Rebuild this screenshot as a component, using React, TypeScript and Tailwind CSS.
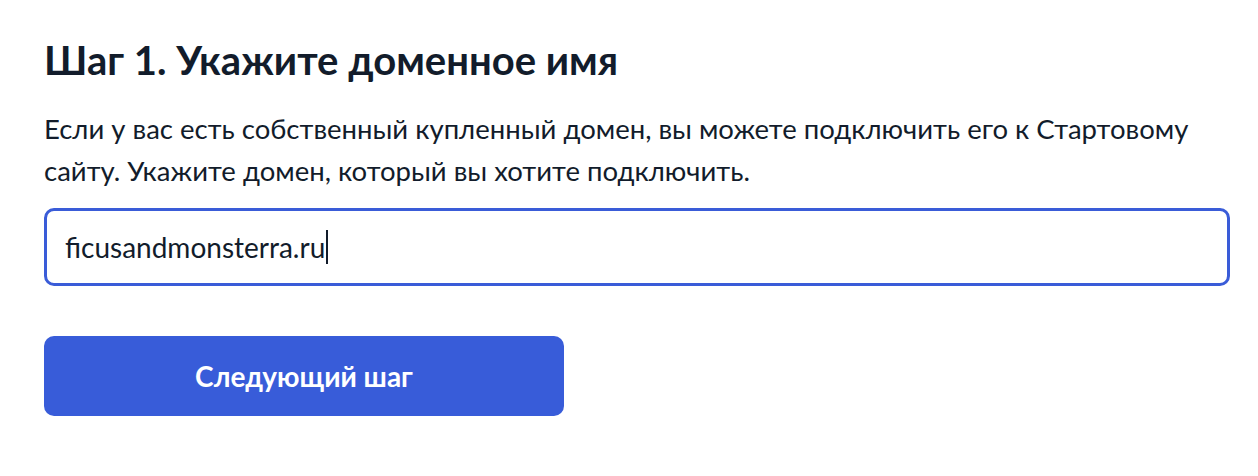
export default function App() {
  return (
    <div className="min-h-screen bg-white px-11 pt-[34px] text-[#121c2b]" style={{ fontFamily: 'Lato, "Noto Sans", sans-serif' }}>
      <h1 className="text-[40px] font-bold leading-[52px]">Шаг 1. Укажите доменное имя</h1>
      <p className="mt-[22px] max-w-[1190px] text-[27.5px] leading-[42px]">
        Если у вас есть собственный купленный домен, вы можете подключить его к Стартовому сайту. Укажите домен, который вы хотите подключить.
      </p>
      <div className="mt-[16px] flex h-[78px] w-[1186px] items-center rounded-[10px] border-[3px] border-[#3a5cd8] px-[18px]">
        <span className="text-[28px]">ficusandmonsterra.ru</span>
        <span className="ml-px h-[34px] w-[2px] bg-[#121c2b]" />
      </div>
      <button className="mt-[50px] h-[80px] w-[520px] rounded-[10px] bg-[#385cd9] text-[28px] font-bold text-white">
        Следующий шаг
      </button>
    </div>
  );
}
